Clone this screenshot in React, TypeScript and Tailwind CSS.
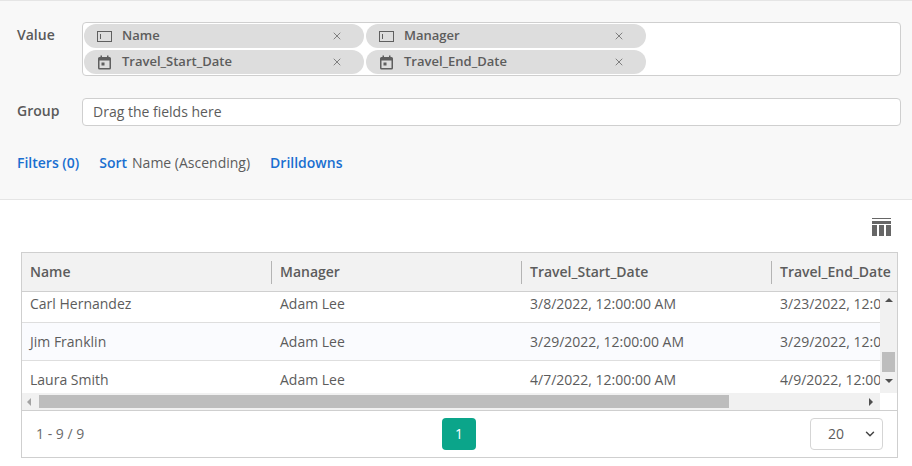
import { ChevronDown, X } from "lucide-react";

const COLUMNS = ["Name", "Manager", "Travel_Start_Date", "Travel_End_Date"];

const ROWS = [
  ["Carl Hernandez", "Adam Lee", "3/8/2022, 12:00:00 AM", "3/23/2022, 12:00:00 AM"],
  ["Jim Franklin", "Adam Lee", "3/29/2022, 12:00:00 AM", "3/29/2022, 12:00:00 AM"],
  ["Laura Smith", "Adam Lee", "4/7/2022, 12:00:00 AM", "4/9/2022, 12:00:00 AM"],
];

function TextFieldIcon() {
  return (
    <svg width="15" height="13" viewBox="0 0 15 13" className="shrink-0" aria-hidden>
      <rect x="0.5" y="1.5" width="14" height="10" fill="none" stroke="#5f5f5f" />
      <rect x="3" y="4" width="1" height="5" fill="#5f5f5f" />
    </svg>
  );
}

function CalendarIcon() {
  return (
    <svg width="15" height="15" viewBox="0 0 15 15" className="shrink-0" aria-hidden>
      <path
        d="M2.5 2h1V.5h1.5V2h5V.5h1.5V2h1A1.5 1.5 0 0 1 14 3.500v9.500a1.500 1.500 0 0 1-1.500 1.500h-10A1.500 1.500 0 0 1 1 13V3.500A1.500 1.500 0 0 1 2.500 2Zm0 3.500V13h10V5.500Z"
        fill="#5f5f5f"
        fillRule="evenodd"
      />
      <rect x="4.500" y="7.500" width="3" height="3" fill="#5f5f5f" />
    </svg>
  );
}

function Chip({ label, date }: { label: string; date?: boolean }) {
  return (
    <div className="flex h-6 w-[280px] items-center rounded-full bg-[#dddddd] pl-[13px] pr-[21px] text-[13px] font-semibold text-[#5c5c5c]">
      <span className="flex w-[25px] shrink-0 items-center">
        {date ? <CalendarIcon /> : <TextFieldIcon />}
      </span>
      <span className="flex-1 leading-none -mt-0.5">{label}</span>
      <X className="size-3 text-[#5f5f5f]" strokeWidth={1.5} />
    </div>
  );
}

function ColumnsIcon() {
  return (
    <svg width="19" height="18" viewBox="0 0 19 18" aria-hidden>
      <path d="M0 0h19v1H0ZM0 3h19v3H0ZM0 7h5v11H0ZM7 7h5v11H7ZM14 7h5v11h-5Z" fill="#666666" />
    </svg>
  );
}

export default function App() {
  return (
    <div className="h-[466px] w-[912px] overflow-hidden bg-white font-['Open_Sans',sans-serif] text-sm text-[#5c5c5c]">
      <section className="h-[200px] border-y border-[#e5e5e5] bg-[#f8f8f8] pl-[17px] pr-[11px] pt-[21px]">
        <div className="flex items-start">
          <span className="w-[65px] pt-[3px] font-semibold leading-5 text-[#5a5a5a]">Value</span>
          <div className="flex h-[54px] flex-1 flex-wrap content-start gap-0.5 rounded border border-[#cfcfcf] bg-white p-px">
            <Chip label="Name" />
            <Chip label="Manager" />
            <Chip label="Travel_Start_Date" date />
            <Chip label="Travel_End_Date" date />
          </div>
        </div>

        <div className="mt-[22px] flex items-center">
          <span className="w-[65px] -mt-[3px] font-semibold text-[#5a5a5a]">Group</span>
          <div className="flex h-7 flex-1 items-center rounded border border-[#cfcfcf] bg-white pl-2.5 text-[#5c5c5c]">
            Drag the fields here
          </div>
        </div>

        <div className="mt-[27px] flex items-center leading-5">
          <a className="font-semibold text-[#1a6fd0]">Filters (0)</a>
          <a className="ml-5 font-semibold text-[#1a6fd0]">Sort</a>
          <span className="ml-[5px]">Name (Ascending)</span>
          <a className="ml-5 font-semibold text-[#1a6fd0]">Drilldowns</a>
        </div>
      </section>

      <div className="flex h-[52px] justify-end pr-[21px] pt-[18px]">
        <ColumnsIcon />
      </div>

      <div className="ml-[21px] h-[206px] w-[877px] overflow-hidden border border-[#cfcfcf]">
        <div className="flex h-[39px] border-b border-[#cfcfcf] bg-[#f2f2f2] font-semibold">
          {COLUMNS.map((col, i) => (
            <div key={col} className="flex w-[250px] shrink-0 items-center pl-2 first:w-[250px]">
              {i > 0 && <span className="-ml-[9px] mr-2 h-[23px] w-px bg-[#b4b4b4]" />}
              <span className="whitespace-nowrap">{col}</span>
            </div>
          ))}
        </div>

        <div className="flex h-[101px]">
          <div className="min-w-0 flex-1 overflow-hidden">
            <div className="-mt-[7px]">
              {ROWS.map((row, i) => (
                <div
                  key={row[0]}
                  className={`flex h-[38px] items-center border-b border-[#dedede] ${i === 1 ? "bg-[#fafbfe]" : "bg-white"}`}
                >
                  {row.map((cell) => (
                    <div key={cell} className="w-[250px] shrink-0 whitespace-nowrap pl-2">
                      {cell}
                    </div>
                  ))}
                </div>
              ))}
            </div>
          </div>
          <div className="flex w-[17px] shrink-0 flex-col items-center bg-[#f1f1f1]">
            <span className="mt-[6px] size-0 border-x-4 border-b-4 border-x-transparent border-b-[#505050]" />
            <span className="mt-[50px] h-5 w-[13px] bg-[#bdbdbd]" />
            <span className="mt-[7px] size-0 border-x-4 border-t-4 border-x-transparent border-t-[#505050]" />
          </div>
        </div>

        <div className="flex h-[17px]">
          <div className="flex flex-1 items-center bg-[#f1f1f1]">
            <span className="ml-[5px] size-0 border-y-4 border-r-4 border-y-transparent border-r-[#a3a3a3]" />
            <span className="ml-2 h-[13px] w-[690px] bg-[#bdbdbd]" />
            <span className="ml-[140px] size-0 border-y-4 border-l-4 border-y-transparent border-l-[#505050]" />
          </div>
          <div className="w-[17px] shrink-0 bg-white" />
        </div>

        <div className="relative flex h-[47px] items-center justify-between border-t border-[#cfcfcf] pl-[14px] pr-[14px]">
          <span className="text-[#6a6a6a]">1 - 9 / 9</span>
          <span className="absolute left-[420px] top-[7px] flex h-8 w-[34px] items-center justify-center rounded bg-[#0ba58a] text-white">
            1
          </span>
          <div className="flex h-8 w-[73px] items-center justify-between rounded border border-[#d5d5d5] pl-[17px] pr-[5px]">
            <span>20</span>
            <ChevronDown className="size-[14px] text-[#444444]" strokeWidth={2.5} />
          </div>
        </div>
      </div>
    </div>
  );
}
